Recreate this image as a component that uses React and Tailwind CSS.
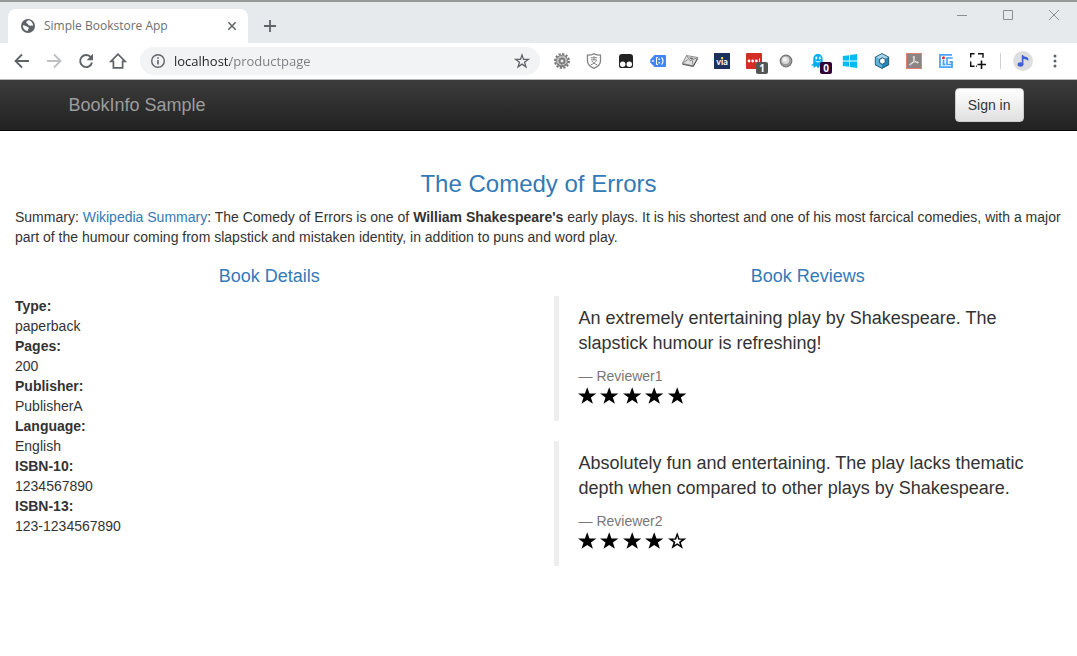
import React from "react";

const STAR = "M12 1.6 14.6 9.2 22.8 9.3 16.3 14.2 18.7 22 12 17.4 5.3 22 7.7 14.2 1.2 9.3 9.4 9.2Z";

function IconButton({ label, className = "w-8", children }) {
  return (
    <button type="button" aria-label={label} className={`flex h-8 shrink-0 items-center justify-center ${className}`}>
      {children}
    </button>
  );
}

function Svg({ size = "size-4", box = "0 0 16 16", children, ...rest }) {
  return (
    <svg className={`${size} shrink-0 overflow-visible`} viewBox={box} fill="none" aria-hidden="true" {...rest}>
      {children}
    </svg>
  );
}

function GearIcon() {
  return (
    <Svg>
      <circle cx="8" cy="8" r="7" stroke="#777" strokeWidth="2" strokeDasharray="2.2 1.46" />
      <circle cx="8" cy="8" r="5.8" fill="#bdbdbd" stroke="#858585" strokeWidth="1" />
      <path d="M8 2.5v11M2.5 8h11M4 4l8 8M12 4l-8 8" stroke="#9a9a9a" strokeWidth=".6" />
      <path d="M3.500 10.500A5.200 5.200 0 0 0 12.500 10.500" stroke="#666" strokeWidth="1" />
      <circle cx="8" cy="8" r="2.800" fill="#8b8b8b" stroke="#777" />
      <circle cx="8" cy="8" r="1.300" fill="#eee" />
    </Svg>
  );
}

function ShieldIcon() {
  return (
    <Svg>
      <path d="M8 .8c2 1 4.500 1.300 6.500 1.300v6c0 3.400-2.800 5.800-6.500 7.300C4.300 13.900 1.500 11.500 1.500 8.100v-6C3.500 2.100 6 1.800 8 .8Z" stroke="#858585" strokeWidth="1.300" />
      <path d="M4.800 4.800h6.400M8 3.200v3.600M5 6.900h5.500c-.8 2.400-2.800 4-5.500 4.800M5.800 8c1.200 1.800 3 3 5.400 3.800" stroke="#858585" />
    </Svg>
  );
}

function MaskIcon() {
  return (
    <Svg>
      <path d="M4 1h8a3 3 0 0 1 3 3v9a2 2 0 0 1-2 2H3a2 2 0 0 1-2-2V4a3 3 0 0 1 3-3Z" fill="#232323" />
      <circle cx="4.700" cy="11.300" r="2.700" fill="#fff" />
      <circle cx="11.300" cy="11.300" r="2.700" fill="#fff" />
    </Svg>
  );
}

function TagIcon() {
  return (
    <Svg>
      <path d="M4.500 2H15a1 1 0 0 1 1 1v10a1 1 0 0 1-1 1H4.500L.3 9.500v-3Z" fill="#4285f4" />
      <circle cx="3" cy="8" r=".9" fill="#fff" />
      <path d="M8 4.500H6.500v7H8" stroke="#fff" strokeWidth="1" />
      <path d="M8.400 5.500h1.500V7H8.400zM8.400 9h1.500v1.500H8.400z" fill="#fff" />
      <path d="M11.500 4.500c1 .8 1.500 2 1.500 3.500s-.5 2.700-1.500 3.500" stroke="#fff" strokeWidth="1.200" />
    </Svg>
  );
}

function EnvelopeIcon() {
  return (
    <Svg>
      <path d="M4.500 2.500 15.700 4.500 11.300 12.800.3 10.500Z" fill="#dedede" stroke="#777" strokeWidth=".8" />
      <path d="m4.500 2.500 3.700 5.300 7.500-3.300M.3 10.500l5.500-4M11.300 12.800l-1-5.200" stroke="#777" strokeWidth=".8" />
      <path d="m7 4.500 2 2 2.500-.8-1-1.200Z" fill="#777" />
      <path d="m.5 11.300 10.800 2.200 4.400-8" stroke="#555" strokeWidth="1" />
    </Svg>
  );
}

function ViaIcon() {
  return (
    <span className="relative flex size-4 items-center justify-center bg-[#1c325c] font-['Lato',sans-serif] text-[9px] leading-none font-bold text-white">
      via
      <span className="absolute top-1 left-[7px] size-[2px] bg-[#e8cf20]" />
    </span>
  );
}

function PasswordIcon() {
  return (
    <span className="relative flex size-4">
      <Svg>
        <rect width="16" height="16" rx="1" fill="#d32d27" />
        <circle cx="3" cy="8" r="1.400" fill="#fff" />
        <circle cx="6.700" cy="8" r="1.400" fill="#fff" />
        <circle cx="10.400" cy="8" r="1.400" fill="#fff" />
        <path d="M13.500 5.500v4" stroke="#fff" />
      </Svg>
      <span className="absolute top-[9px] left-[10px] flex h-3 w-3 items-center justify-center rounded-xs bg-[#555] font-['Open_Sans',sans-serif] text-[10px] leading-none font-bold text-white">1</span>
    </span>
  );
}

function BallIcon() {
  return (
    <Svg>
      <circle cx="8" cy="8" r="5.800" fill="#9c9c9c" stroke="#777" strokeWidth="1.200" />
      <circle cx="7.500" cy="7.200" r="3.800" fill="#dadada" />
      <circle cx="6.800" cy="6.500" r="2" fill="#f4f4f4" />
    </Svg>
  );
}

function GhostIcon() {
  return (
    <span className="relative flex size-4">
      <Svg>
        <path d="M8 1C4.800 1 3.300 3 3.300 6v3.500c0 1.500-.8 2-2.300 2.500 1 1 2 1 3 .4-.2 1-.8 1.600-1.200 2.200 1.600 0 2.600-.6 3.400-1.600.7 1.200 1.500 2 2.500 2 .8-.4.800-1.400.8-2.200 1.300.8 2.500 1 4.500.2-1-.8-1.400-2-1.400-3.500V6c0-3-1.600-5-4.600-5Z" fill="#00aef0" />
        <ellipse cx="6.300" cy="5" rx="1" ry="1.400" fill="#fff" />
        <ellipse cx="9.800" cy="5" rx="1" ry="1.400" fill="#fff" />
        <path d="M5.500 7.800c1.500 1.500 3.700 1.500 5.200 0" stroke="#fff" />
      </Svg>
      <span className="absolute top-[9px] left-[10px] flex h-3 w-3 items-center justify-center rounded-xs bg-[#330033] font-['Open_Sans',sans-serif] text-[10px] leading-none font-bold text-white">0</span>
    </span>
  );
}

function WindowsIcon() {
  return (
    <Svg>
      <path d="M.8 3 7 2.200v5.300H.8ZM7.900 2.100 15.200 1v6.500H7.900ZM.8 8.400H7v5.400L.8 12.900ZM7.900 8.400h7.300V15l-7.300-1Z" fill="#00bcf2" />
    </Svg>
  );
}

function CubeIcon() {
  return (
    <Svg>
      <path d="m8 .6 6.700 3.500v7.800L8 15.400l-6.700-3.500V4.100Z" fill="#2387bd" stroke="#1b4d68" strokeWidth=".9" />
      <path d="m8 1 6.200 3.300L10.500 6 8 4.500 5 6 1.800 4.300Z" fill="#a6d3e6" />
      <path d="m1.800 4.500 3 1.600v4L8 12v2.800l-6.200-3.200Z" fill="#5fb4da" />
      <path d="m8.300 4.800 3 1.500-.2 3.400L8.200 11.300 5.600 9.500V6.600Z" fill="#fff" stroke="#1b4d68" strokeWidth=".9" />
    </Svg>
  );
}

function AcrobatIcon() {
  return (
    <Svg>
      <rect x=".5" y=".5" width="15" height="15" fill="#8d8583" stroke="#dc8271" />
      <path d="M7.800 3c1.200.5.300 3.500-.4 5.200C6.300 10.500 4.700 12.500 3.800 12c-.8-.6 1.200-2.200 3.800-2.800 2.700-.6 5.200-.4 4.800.4-.5 1-3-.3-4.200-2.300C7.200 5.500 7 3 7.800 3Z" stroke="#f1eeee" strokeWidth=".9" />
    </Svg>
  );
}

function IgIcon() {
  return (
    <Svg>
      <path d="M14 1.800H2v12.400h12V8.800h-2.500" stroke="#4da3f5" strokeWidth="1.800" />
      <path d="M14.800 5H9v6.500h5" stroke="#4da3f5" strokeWidth="1.700" />
      <path d="M5.500 6.800v4.700M4.500 11.500h3" stroke="#4da3f5" strokeWidth="1.800" />
      <circle cx="5.500" cy="4.700" r="1.500" fill="#f02525" />
    </Svg>
  );
}

function CaptureIcon() {
  return (
    <Svg>
      <path d="M.7 4.500V.7H4.500M8 .7h5v4M.7 8.500v4.800H4.500M6.200 13.300H7" stroke="#111" strokeWidth="1.400" />
      <path d="M11.500 7.500V16M7.500 11.500H16" stroke="#111" strokeWidth="1.600" />
    </Svg>
  );
}

const EXTENSIONS = [
  ["Settings extension", GearIcon],
  ["Payment security", ShieldIcon],
  ["User scripts", MaskIcon],
  ["Tag tool", TagIcon],
  ["Mail", EnvelopeIcon],
  ["Via", ViaIcon],
  ["Passwords", PasswordIcon],
  ["Sphere", BallIcon],
  ["Tracker blocker", GhostIcon],
  ["Windows", WindowsIcon],
  ["Cube", CubeIcon],
  ["Acrobat", AcrobatIcon],
  ["Page insights", IgIcon],
  ["Capture", CaptureIcon],
];

function TabStrip() {
  return (
    <div className="flex h-[43px] items-start border-t-2 border-[#999b9b] bg-[#e7eaed]">
      <div className="mt-[7px] ml-2 flex h-[34px] w-60 items-center rounded-t-lg bg-white pr-[10px] pl-3">
        <Svg>
          <circle cx="8" cy="8" r="7" fill="#5f6368" />
          <path d="M9 2.300C7.500 2.500 6.300 3.300 6.300 4.600c0 1.300 1.700 1 2 2 .2 1 1.300 1.400 2.400 1.100 1-.3 1.500-.3 2.300.3.300-2.500-1.500-5-4-5.700ZM2.800 7.200c-.2 3 2 5.300 4.700 5.800.7-.7.300-1.300.9-2 .8-.8.300-1.800-.7-2.100C6.500 8.500 5.500 7.200 2.800 7.200Z" fill="#fff" />
        </Svg>
        <span className="ml-2 flex-1 font-['Open_Sans',sans-serif] text-[12px] text-[#6b6f74]">Simple Bookstore App</span>
        <button type="button" aria-label="Close tab" className="flex size-3 items-center justify-center">
          <Svg size="size-2" box="0 0 8 8">
            <path d="m.3.3 7.400 7.400M7.700.3.300 7.700" stroke="#5f6368" strokeWidth="1.500" />
          </Svg>
        </button>
      </div>
      <button type="button" aria-label="New tab" className="mt-[10px] ml-2 flex size-7 items-center justify-center">
        <Svg size="size-3" box="0 0 12 12">
          <path d="M6 0v12M0 6h12" stroke="#5f6368" strokeWidth="1.800" />
        </Svg>
      </button>
      <div className="-mt-[3px] ml-auto flex">
        <IconButton label="Minimize" className="w-[46px]">
          <Svg size="size-[10px]" box="0 0 10 10"><path d="M0 5.500h10" stroke="#8b8e90" /></Svg>
        </IconButton>
        <IconButton label="Maximize" className="w-[46px]">
          <Svg size="size-[10px]" box="0 0 10 10"><path d="M.5.500h9v9h-9z" stroke="#8b8e90" /></Svg>
        </IconButton>
        <IconButton label="Close" className="w-[46px]">
          <Svg size="size-[10px]" box="0 0 10 10"><path d="m0 0 10 10M10 0 0 10" stroke="#8b8e90" /></Svg>
        </IconButton>
      </div>
    </div>
  );
}

function Toolbar() {
  return (
    <div className="flex h-[37px] items-center border-b border-[#b5b6b7] bg-white pl-[6px]">
      <IconButton label="Back">
        <Svg><path d="M15 8H2M8 1.500 1.500 8 8 14.500" stroke="#5f6368" strokeWidth="1.800" /></Svg>
      </IconButton>
      <IconButton label="Forward">
        <Svg><path d="M1 8h13M8 1.500 14.500 8 8 14.500" stroke="#bdbfc1" strokeWidth="1.800" /></Svg>
      </IconButton>
      <IconButton label="Reload">
        <Svg>
          <path d="M13 4.500A6 6 0 1 0 14 9.500" stroke="#5f6368" strokeWidth="1.900" />
          <path d="M15 .8v6.400H8.600Z" fill="#5f6368" />
        </Svg>
      </IconButton>
      <IconButton label="Home">
        <Svg><path d="M8 1.200.9 8.300h2.500v6.500h9.200V8.300h2.500Z" stroke="#5f6368" strokeWidth="1.700" /></Svg>
      </IconButton>
      <div className="ml-[6px] flex h-7 min-w-0 flex-1 items-center rounded-full bg-[#f1f3f4] pr-[10px] pl-[10px]">
        <Svg>
          <circle cx="8" cy="8" r="6.300" stroke="#5f6368" strokeWidth="1.400" />
          <path d="M8 7v4.500M8 4.200v1.500" stroke="#5f6368" strokeWidth="1.600" />
        </Svg>
        <input
          aria-label="Address"
          type="text"
          defaultValue="localhost/productpage"
          className="ml-2 min-w-0 flex-1 bg-linear-to-r from-[#202124] from-[56px] to-[#777b80] to-[56px] bg-clip-text font-['Open_Sans',sans-serif] text-[13px] text-transparent outline-none"
        />
        <button type="button" aria-label="Bookmark this page" className="flex size-4 items-center justify-center">
          <Svg size="size-[14px]" box="0 0 24 24"><path d={STAR} stroke="#5f6368" strokeWidth="2.200" /></Svg>
        </button>
      </div>
      <div className="ml-[6px] flex">
        {EXTENSIONS.map(([label, Icon]) => (
          <IconButton key={label} label={label}><Icon /></IconButton>
        ))}
      </div>
      <div className="ml-[6px] h-4 w-px bg-[#d0d2d4]" />
      <IconButton label="Profile" className="ml-[6px] w-8">
        <Svg size="size-5" box="0 0 20 20">
          <circle cx="10" cy="10" r="10" fill="#dedede" />
          <ellipse cx="7.500" cy="13.500" rx="2.900" ry="2.200" fill="#3f5fd5" />
          <path d="M9.600 13.500V4.200" stroke="#3f5fd5" strokeWidth="1.600" />
          <path d="M9 4c1.500 2 3.500 1 5.500 2.500 1 .9 1.200 2 .6 3.500-.8-1.500-3-2-6.100-2Z" fill="#3f5fd5" />
        </Svg>
      </IconButton>
      <IconButton label="Menu" className="mr-[6px] w-8">
        <Svg>
          <circle cx="8" cy="3" r="1.500" fill="#5f6368" />
          <circle cx="8" cy="8" r="1.500" fill="#5f6368" />
          <circle cx="8" cy="13" r="1.500" fill="#5f6368" />
        </Svg>
      </IconButton>
    </div>
  );
}

const DETAILS = [
  ["Type:", "paperback"],
  ["Pages:", "200"],
  ["Publisher:", "PublisherA"],
  ["Language:", "English"],
  ["ISBN-10:", "1234567890"],
  ["ISBN-13:", "123-1234567890"],
];

const REVIEWS = [
  ["An extremely entertaining play by Shakespeare. The slapstick humour is refreshing!", "Reviewer1", 5],
  ["Absolutely fun and entertaining. The play lacks thematic depth when compared to other plays by Shakespeare.", "Reviewer2", 4],
];

function Stars({ count }) {
  return (
    <div role="img" aria-label={`${count} out of 5 stars`} className="flex h-[25px] w-[108px] items-start justify-between">
      {[1, 2, 3, 4, 5].map((n) => (
        <svg key={n} className="size-[18px] overflow-visible" viewBox="0 0 18 18" aria-hidden="true">
          <path d="M8.200 1.300 10.500 7.500h6.900l-5.500 4 2 6.300L8.200 14l-5.700 3.800 2-6.300L-1 7.500h6.900Z" fill="#000" />
          {n > count && <path d="m8.200 5.300 1.100 3.500h3.400l-2.700 2.100 1 3.200-2.800-1.900-2.800 1.900 1-3.200-2.700-2.100h3.400Z" fill="#fff" />}
        </svg>
      ))}
    </div>
  );
}

export default function App() {
  return (
    <div className="min-h-screen bg-white font-['Liberation_Sans',Arial,sans-serif] text-[14px] leading-5 text-[#333]">
      <header>
        <TabStrip />
        <Toolbar />
      </header>
      <nav className="border-b border-[#080808] bg-linear-to-b from-[#3c3c3c] to-[#222]">
        <div className="mx-auto flex h-[50px] max-w-[970px] items-center justify-between pl-[15px]">
          <a href="#" className="text-[18px] text-[#9d9d9d]">BookInfo Sample</a>
          <button type="button" className="h-[34px] rounded-sm border border-[#ccc] bg-linear-to-b from-white to-[#e0e0e0] px-3 text-[#333]">
            Sign in
          </button>
        </div>
      </nav>
      <main className="px-[15px] pt-10">
        <h3 className="text-center text-[24px] leading-[26px] text-[#337ab7]">The Comedy of Errors</h3>
        <p className="mt-[10px]">
          Summary: <a href="#" className="text-[#337ab7]">Wikipedia Summary</a>: The Comedy of Errors is one of <b>William Shakespeare's</b> early plays. It is his shortest and one of his most farcical comedies, with a major part of the humour coming from slapstick and mistaken identity, in addition to puns and word play.
        </p>
        <div className="mt-[19px] grid grid-cols-2 gap-[30px]">
          <section>
            <h4 className="text-center text-[18px] leading-5 text-[#337ab7]">Book Details</h4>
            <dl className="mt-[10px]">
              {DETAILS.map(([term, value]) => (
                <React.Fragment key={term}>
                  <dt className="font-bold">{term}</dt>
                  <dd>{value}</dd>
                </React.Fragment>
              ))}
            </dl>
          </section>
          <section>
            <h4 className="text-center text-[18px] leading-5 text-[#337ab7]">Book Reviews</h4>
            <div className="mt-[10px] flex flex-col gap-5">
              {REVIEWS.map(([text, author, count]) => (
                <blockquote key={author} className="border-l-[5px] border-[#eee] px-5 py-[10px]">
                  <p className="text-[18px] leading-[25px]">{text}</p>
                  <footer className="mt-[10px] text-[#777]">— {author}</footer>
                  <Stars count={count} />
                </blockquote>
              ))}
            </div>
          </section>
        </div>
      </main>
    </div>
  );
}
